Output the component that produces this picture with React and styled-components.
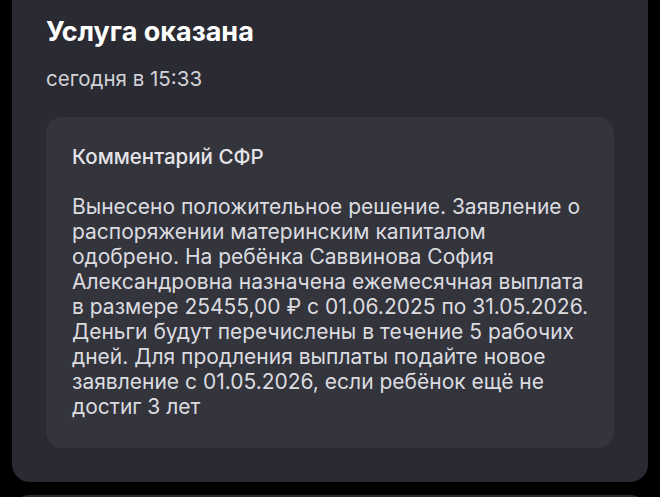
import React from 'react';
import styled, { createGlobalStyle } from 'styled-components';

const Global = createGlobalStyle`
    html, body {
        margin: 0;
        padding: 0;
        background: #000;
    }
    body {
        font-family: Inter, "Noto Sans", sans-serif;
        -webkit-font-smoothing: antialiased;
    }
`;

const Page = styled.div`
    width: 660px;
    height: 497px;
    overflow: hidden;
    padding: 0 12px;
    box-sizing: border-box;
    display: flex;
    flex-direction: column;
    gap: 13px;
`;

const Card = styled.div`
    background: #2a2a32;
    border-radius: ${p => p.top ? '18px 18px 0 0' : '0 0 18px 18px'};
    padding: ${p => p.top ? '0' : '16px 34px 34px 34px'};
    min-height: ${p => p.top ? '40px' : '0'};
    flex-shrink: 0;
`;

const Title = styled.h1`
    margin: 0;
    font-size: 27px;
    line-height: 32px;
    font-weight: 700;
    color: #fff;
`;

const Time = styled.div`
    margin-top: 19px;
    font-size: 20.5px;
    line-height: 24px;
    color: #d2d2d8;
`;

const Comment = styled.div`
    margin-top: 26px;
    background: #33343c;
    border-radius: 16px;
    padding: 27px 26px 29px 26px;
`;

const CommentTitle = styled.div`
    font-size: 20.5px;
    line-height: 26px;
    font-weight: 500;
    color: #e4e4e8;
`;

const Body = styled.p`
    margin: 24px 0 0;
    font-size: 21px;
    line-height: 25px;
    color: #dcdce0;
    white-space: nowrap;
`;

const lines = [
    'Вынесено положительное решение. Заявление о',
    'распоряжении материнским капиталом',
    'одобрено. На ребёнка Саввинова София',
    'Александровна назначена ежемесячная выплата',
    'в размере 25455,00 ₽ с 01.06.2025 по 31.05.2026.',
    'Деньги будут перечислены в течение 5 рабочих',
    'дней. Для продления выплаты подайте новое',
    'заявление с 01.05.2026, если ребёнок ещё не',
    'достиг 3 лет',
];

export default function App() {
    return (
        <Page>
            <Global />
            <Card>
                <Title>Услуга оказана</Title>
                <Time>сегодня в 15:33</Time>
                <Comment>
                    <CommentTitle>Комментарий СФР</CommentTitle>
                    <Body>
                        {lines.map((l, i) => (
                            <React.Fragment key={i}>
                                {l}
                                {i < lines.length - 1 && <br />}
                            </React.Fragment>
                        ))}
                    </Body>
                </Comment>
            </Card>
            <Card top />
        </Page>
    );
}
